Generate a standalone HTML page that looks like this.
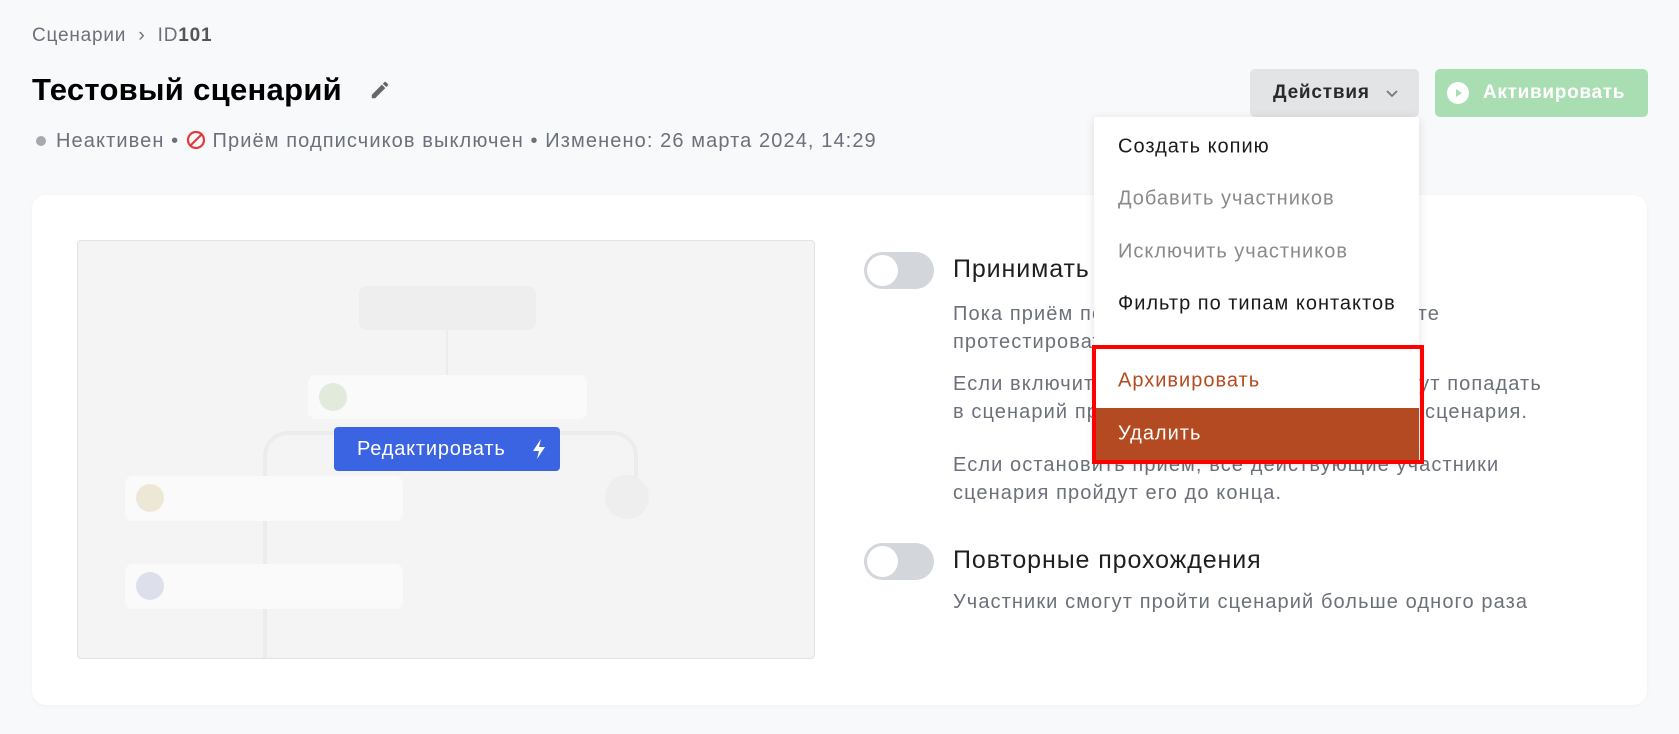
<!DOCTYPE html>
<html><head><meta charset="utf-8">
<style>
*{box-sizing:border-box;margin:0;padding:0}
body{width:1679px;height:734px;background:#f8f9fb;font-family:"Liberation Sans","Noto Sans CJK SC",sans-serif;position:relative;overflow:hidden;color:#1a1a1a}
.a{position:absolute;white-space:nowrap}
.gray{color:#6b707a}
.card{position:absolute;left:32px;top:195px;width:1615px;height:510px;background:#fff;border-radius:14px;box-shadow:0 1px 4px rgba(0,0,0,.04)}
.prev{position:absolute;left:77px;top:240px;width:738px;height:419px;background:#f4f4f4;border:1px solid #e3e3e3;border-radius:4px;overflow:hidden}
.node{position:absolute;background:#fafafa;border-radius:8px}
.tog{position:absolute;width:70px;height:37px;border-radius:19px;background:#d3d6db}
.tog::after{content:"";position:absolute;left:3px;top:3px;width:31px;height:31px;border-radius:50%;background:#fff}
.desc{position:absolute;left:953px;font-size:20px;letter-spacing:1.1px;color:#6b707a;line-height:28px;white-space:nowrap}
.menu{position:absolute;left:1094px;top:117px;width:325px;height:345px;background:#fff;box-shadow:0 2px 10px rgba(0,0,0,.12);border-radius:2px}
.mi{position:absolute;left:24px;font-size:20px;letter-spacing:1px;transform:translateY(-50%)}
h2{position:absolute;left:953px;font-size:25px;letter-spacing:0.9px;font-weight:normal;color:#1f1f1f;white-space:nowrap}
</style></head><body>
<div class="a gray" style="left:32px;top:25px;font-size:19px;letter-spacing:0.8px">Сценарии &nbsp;›&nbsp; ID<b style="color:#555">101</b></div>
<div class="a" style="left:32px;top:72px;font-size:31px;font-weight:bold;letter-spacing:0.3px;color:#000">Тестовый сценарий</div>
<svg class="a" style="left:369px;top:79px" width="22" height="22" viewBox="0 0 24 24"><path d="M3 17.25V21h3.75L17.8 9.94l-3.75-3.75L3 17.25zM20.7 7.04a1 1 0 000-1.41l-2.34-2.34a1 1 0 00-1.41 0l-1.83 1.83 3.75 3.75 1.83-1.83z" fill="#666"/></svg>
<div class="a gray" style="left:36px;top:130px;font-size:20px;letter-spacing:1.1px"><span style="display:inline-block;width:10px;height:10px;border-radius:50%;background:#a5a9b0;margin-right:10px;vertical-align:1px"></span>Неактивен • <svg width="20" height="20" viewBox="0 0 20 20" style="vertical-align:-3px"><circle cx="10" cy="10" r="8" fill="none" stroke="#e23b3b" stroke-width="2.2"/><path d="M4.5 15.5L15.5 4.5" stroke="#e23b3b" stroke-width="2.2"/></svg> Приём подписчиков выключен • Изменено: 26 марта 2024, 14:29</div>

<div class="a" style="left:1250px;top:69px;width:169px;height:48px;background:#e3e4e5;border-radius:5px;font-size:19px;letter-spacing:0.8px;font-weight:bold;color:#2a2a2a;line-height:48px;padding-left:23px">Действия <svg style="position:absolute;right:20px;top:20px" width="14" height="9" viewBox="0 0 14 9"><path d="M2 2l5 5 5-5" fill="none" stroke="#777" stroke-width="1.8"/></svg></div>
<div class="a" style="left:1435px;top:69px;width:213px;height:48px;background:#a9deb2;border-radius:5px;color:#fff;font-size:19px;letter-spacing:0.7px;font-weight:bold;line-height:48px;padding-left:48px">Активировать
<svg style="position:absolute;left:11px;top:12px" width="24" height="24" viewBox="0 0 24 24"><circle cx="12" cy="12" r="11" fill="#fff"/><path d="M10 8l6 4-6 4z" fill="#a9deb2"/></svg></div>

<div class="card"></div>
<div class="prev">
 <div class="node" style="left:281px;top:45px;width:177px;height:44px;background:#eeeeee"></div>
 <div style="position:absolute;left:368px;top:89px;width:2px;height:45px;background:#ececec"></div>
 <div style="position:absolute;left:185px;top:190px;width:375px;height:60px;border:4px solid #ececec;border-bottom:none;border-radius:25px 25px 0 0"></div>
 <div style="position:absolute;left:185px;top:220px;width:4px;height:200px;background:#ececec"></div>
 <div class="node" style="left:230px;top:134px;width:279px;height:44px"><div style="position:absolute;left:11px;top:8px;width:28px;height:28px;border-radius:50%;background:#e1eadc"></div></div>
 <div class="node" style="left:47px;top:235px;width:278px;height:45px"><div style="position:absolute;left:11px;top:8px;width:28px;height:28px;border-radius:50%;background:#ede8d6"></div></div>
 <div class="node" style="left:47px;top:323px;width:278px;height:45px"><div style="position:absolute;left:11px;top:8px;width:28px;height:28px;border-radius:50%;background:#dde0eb"></div></div>
 <div style="position:absolute;left:527px;top:234px;width:44px;height:44px;border-radius:50%;background:#eeeeee"></div>
 <div style="position:absolute;left:256px;top:186px;width:226px;height:44px;background:#3b64e3;border-radius:4px;color:#fff;font-size:20px;letter-spacing:0.8px;line-height:44px;padding-left:23px">Редактировать
  <svg style="position:absolute;right:12px;top:11px" width="18" height="22" viewBox="0 0 18 22"><path d="M11 1L3 13h6l-2 8 8-12H9z" fill="#fff"/></svg></div>
</div>

<div class="tog" style="left:864px;top:252px"></div>
<h2 style="top:255px">Принимать подписчиков</h2>
<div class="desc" style="top:300px">Пока приём подписчиков выключен, вы можете<br>протестировать сценарий.</div>
<div class="desc" style="top:370px">Если включить приём, новые подписчики будут попадать<br>в сценарий при выполнении условий запуска сценария.</div>
<div class="desc" style="top:451px">Если остановить приём, все действующие участники<br>сценария пройдут его до конца.</div>
<div class="tog" style="left:864px;top:543px"></div>
<h2 style="top:546px">Повторные прохождения</h2>
<div class="desc" style="top:588px">Участники смогут пройти сценарий больше одного раза</div>

<div class="menu">
 <div class="mi" style="top:30px;color:#1a1a1a">Создать копию</div>
 <div class="mi" style="top:82px;color:#8a8a8a">Добавить участников</div>
 <div class="mi" style="top:135px;color:#8a8a8a">Исключить участников</div>
 <div class="mi" style="top:187px;color:#1a1a1a">Фильтр по типам контактов</div>
 <div style="position:absolute;left:0;top:228px;width:100%;height:1px;background:#eee"></div>
 <div class="mi" style="top:264px;color:#b54a22">Архивировать</div>
 <div style="position:absolute;left:0;top:291px;width:100%;height:52px;background:#b34a22"></div>
 <div class="mi" style="top:317px;color:#fff">Удалить</div>
</div>
<div class="a" style="left:1092px;top:345px;width:332px;height:119px;border:4px solid #ff0000"></div>
</body></html>
